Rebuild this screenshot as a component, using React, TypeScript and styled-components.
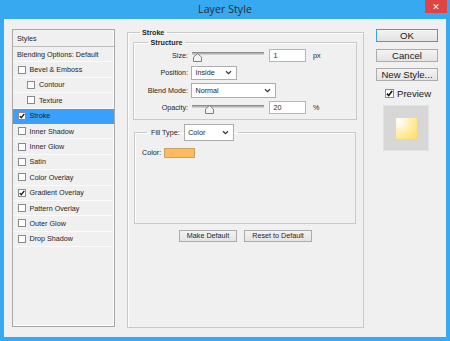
import React from "react";
import styled, { createGlobalStyle } from "styled-components";

const GlobalStyle = createGlobalStyle`
  html, body { margin: 0; padding: 0; background: #36a9f0; }
  * { box-sizing: border-box; }
  body { font-family: "Liberation Sans", Arial, sans-serif; }
`;

const small = `font-family: "Liberation Sans", Arial, sans-serif; font-size: 7.2px; color: #1e1e1e;`;

const Window = styled.div`
  width: 450px;
  height: 341px;
  background: #36a9f0;
  padding: 0 4px 4px 4px;
  display: flex;
  flex-direction: column;
`;

const TitleBar = styled.div`
  position: relative;
  height: 19px;
  display: flex;
  align-items: center;
  justify-content: center;
`;

const Title = styled.div`
  font-family: "Open Sans", "Noto Sans", sans-serif;
  font-size: 10.5px;
  color: #2a2a2a;
  margin-top: -1px;
  letter-spacing: 0.1px;
`;

const CloseButton = styled.div`
  position: absolute;
  top: 0;
  right: -1px;
  width: 22px;
  height: 13px;
  background: #e04444;
  color: #fff;
  font-family: "DejaVu Sans", sans-serif;
  font-size: 9px;
  font-weight: bold;
  display: flex;
  align-items: center;
  justify-content: center;
`;

const Body = styled.div`
  flex: 1;
  background: #f0f0f0;
  display: flex;
  padding: 8.5px 8px 9px 8px;
`;

const StyleList = styled.div`
  width: 103px;
  height: 298px;
  margin-top: 1.5px;
  border: 1px solid #a8a8a8;
  box-shadow: inset -1px -1px 0 #fcfcfc;
  background: #f0f0f0;
  display: flex;
  flex-direction: column;
`;

const ListHeader = styled.div`
  ${small}
  height: 17px;
  border-bottom: 1px solid #bdbdbd;
  display: flex;
  align-items: center;
  padding-left: 4px;
`;

const ListRow = styled.div<{ $indent?: boolean; $selected?: boolean; $plain?: boolean }>`
  ${small}
  height: 15.4px;
  border-bottom: 1px solid ${(p) => (p.$selected ? "#3aa0fa" : "#fbfbfb")};
  background: ${(p) => (p.$selected ? "#3aa0fa" : "transparent")};
  display: flex;
  align-items: center;
  gap: 4px;
  padding-left: ${(p) => (p.$plain ? 4 : p.$indent ? 14 : 4.5)}px;
`;

const CheckBox = styled.span<{ $size?: number }>`
  width: ${(p) => p.$size ?? 8}px;
  height: ${(p) => p.$size ?? 8}px;
  border: 1px solid #8a8a8a;
  background: #fff;
  display: inline-flex;
  align-items: center;
  justify-content: center;
  flex: none;
`;

const Check: React.FC<{ checked?: boolean; size?: number }> = ({ checked, size }) => (
  <CheckBox $size={size}>
    {checked && (
      <svg width={(size ?? 8) - 2} height={(size ?? 8) - 2} viewBox="0 0 6 6">
        <path d="M0.8 3.1 L2.3 4.7 L5.3 0.9" fill="none" stroke="#111" strokeWidth="1.3" />
      </svg>
    )}
  </CheckBox>
);

const GroupBox = styled.fieldset`
  margin: 0;
  padding: 0;
  min-width: 0;
  border: 1px solid #c9c9c9;
  box-shadow: 1px 1px 0 #fdfdfd inset;
`;

const StrokeGroup = styled(GroupBox)`
  width: 237px;
  height: 300px;
  margin-left: 12px;
  display: flex;
  flex-direction: column;
`;

const GroupLegend = styled.legend<{ $offset: number }>`
  ${small}
  font-weight: bold;
  line-height: 9px;
  padding: 0 2.5px;
  margin-left: ${(p) => p.$offset}px;
`;

const StructureGroup = styled(GroupBox)`
  margin: 1px 6px 0 5px;
  padding: 0 0 2px 0;
`;

const FieldGrid = styled.div`
  display: grid;
  grid-template-columns: 54px auto;
  grid-auto-rows: 17.5px;
  column-gap: 3px;
  align-items: center;
`;

const FieldLabel = styled.div`
  ${small}
  text-align: right;
`;

const FieldControls = styled.div`
  display: flex;
  align-items: center;
`;

const SliderBox = styled.div`
  position: relative;
  width: 72px;
  height: 15px;
  margin-left: 1px;
`;

const Track = styled.div`
  position: absolute;
  left: 0;
  right: 0;
  top: 4.5px;
  height: 3px;
  background: #b2b2b2;
  border-top: 1px solid #8e8e8e;
  border-bottom: 1px solid #d0d0d0;
`;

const Thumb = styled.svg`
  position: absolute;
  top: 5px;
`;

const Slider: React.FC<{ pos: number }> = ({ pos }) => (
  <SliderBox>
    <Track />
    <Thumb width="9" height="9" viewBox="0 0 9 9" style={{ left: pos }}>
      <path d="M0.5 8.5 V4 L4.5 0.7 L8.5 4 V8.5 Z" fill="#f3f3f3" stroke="#808080" strokeWidth="1" />
    </Thumb>
  </SliderBox>
);

const NumberInput = styled.div`
  ${small}
  width: 37px;
  height: 13px;
  margin-left: 5px;
  border: 1px solid #b4b6bd;
  background: #fff;
  display: flex;
  align-items: center;
  padding-left: 3.5px;
`;

const Unit = styled.span`
  ${small}
  margin-left: 7px;
`;

const SelectBox = styled.div<{ $width: number; $height: number }>`
  ${small}
  width: ${(p) => p.$width}px;
  height: ${(p) => p.$height}px;
  border: 1px solid #adadad;
  background: #fff;
  display: flex;
  align-items: center;
  justify-content: space-between;
  padding: 0 4px 0 3.5px;
`;

const Select: React.FC<{ value: string; width: number; height: number }> = ({ value, width, height }) => (
  <SelectBox $width={width} $height={height}>
    <span>{value}</span>
    <svg width="7" height="5" viewBox="0 0 7 5">
      <path d="M1 1.2 L3.5 3.6 L6 1.2" fill="none" stroke="#333" strokeWidth="1.2" />
    </svg>
  </SelectBox>
);

const FillGroup = styled(GroupBox)`
  margin: 4px 7px 0 6px;
  height: 100px;
  padding: 0;
`;

const FillLegend = styled.legend`
  ${small}
  display: flex;
  align-items: center;
  gap: 4px;
  padding: 0 4px;
  margin-left: 12px;
`;

const ColorRow = styled.div`
  display: flex;
  align-items: center;
  gap: 3px;
  margin-top: 7px;
  padding-left: 7px;
`;

const SmallText = styled.span`
  ${small}
`;

const Swatch = styled.div<{ $color: string }>`
  width: 31px;
  height: 10px;
  background: ${(p) => p.$color};
  border: 1px solid #c8a070;
`;

const ButtonRow = styled.div`
  display: flex;
  justify-content: center;
  gap: 7px;
  margin-top: 6px;
`;

const SmallButton = styled.div<{ $width: number }>`
  ${small}
  width: ${(p) => p.$width}px;
  height: 12.5px;
  border: 1px solid #acacac;
  background: linear-gradient(#f3f3f3, #e4e4e4);
  display: flex;
  align-items: center;
  justify-content: center;
`;

const SideColumn = styled.div`
  width: 62px;
  margin-left: 12px;
  margin-top: 1.5px;
  display: flex;
  flex-direction: column;
`;

const DialogButton = styled.div<{ $primary?: boolean }>`
  font-family: "Liberation Sans", Arial, sans-serif;
  font-size: 9.6px;
  color: #1a1a1a;
  height: 13px;
  margin-bottom: 6.5px;
  border: 1px solid ${(p) => (p.$primary ? "#3c9ee6" : "#acacac")};
  background: linear-gradient(#f3f3f3, #e3e3e3);
  display: flex;
  align-items: center;
  justify-content: center;
`;

const PreviewToggle = styled.div`
  display: flex;
  align-items: center;
  gap: 3px;
  margin: 0.5px 0 0 9px;
  font-family: "Liberation Sans", Arial, sans-serif;
  font-size: 9.6px;
  color: #1a1a1a;
`;

const PreviewBox = styled.div`
  width: 46px;
  height: 46px;
  margin: 6px 0 0 7px;
  background: #d7d7d7;
  border: 1px solid #e2e2e2;
  display: flex;
  align-items: center;
  justify-content: center;
`;

const PreviewSwatch = styled.div`
  width: 21px;
  height: 21px;
  background: radial-gradient(circle at 15% 15%, #ffffff 0%, #fff3c0 35%, #ffe47e 75%, #ffdc6a 100%);
`;

const layers: { name: string; indent?: boolean; checked?: boolean; selected?: boolean }[] = [
  { name: "Bevel & Emboss" },
  { name: "Contour", indent: true },
  { name: "Texture", indent: true },
  { name: "Stroke", checked: true, selected: true },
  { name: "Inner Shadow" },
  { name: "Inner Glow" },
  { name: "Satin" },
  { name: "Color Overlay" },
  { name: "Gradient Overlay", checked: true },
  { name: "Pattern Overlay" },
  { name: "Outer Glow" },
  { name: "Drop Shadow" },
];

export default function App() {
  return (
    <>
      <GlobalStyle />
      <Window>
        <TitleBar>
          <Title>Layer Style</Title>
          <CloseButton>✕</CloseButton>
        </TitleBar>
        <Body>
          <StyleList>
            <ListHeader>Styles</ListHeader>
            <ListRow $plain>Blending Options: Default</ListRow>
            {layers.map((l) => (
              <ListRow key={l.name} $indent={l.indent} $selected={l.selected}>
                <Check checked={l.checked} />
                <span>{l.name}</span>
              </ListRow>
            ))}
          </StyleList>

          <StrokeGroup>
            <GroupLegend $offset={11.5}>Stroke</GroupLegend>
            <StructureGroup>
              <GroupLegend $offset={14}>Structure</GroupLegend>
              <FieldGrid>
                <FieldLabel>Size:</FieldLabel>
                <FieldControls>
                  <Slider pos={0.5} />
                  <NumberInput>1</NumberInput>
                  <Unit>px</Unit>
                </FieldControls>
                <FieldLabel>Position:</FieldLabel>
                <FieldControls>
                  <Select value="Inside" width={46} height={14} />
                </FieldControls>
                <FieldLabel>Blend Mode:</FieldLabel>
                <FieldControls>
                  <Select value="Normal" width={85} height={15} />
                </FieldControls>
                <FieldLabel>Opacity:</FieldLabel>
                <FieldControls>
                  <Slider pos={12.5} />
                  <NumberInput>20</NumberInput>
                  <Unit>%</Unit>
                </FieldControls>
              </FieldGrid>
            </StructureGroup>

            <FillGroup>
              <FillLegend>
                <span>Fill Type:</span>
                <Select value="Color" width={50} height={17} />
              </FillLegend>
              <ColorRow>
                <SmallText>Color:</SmallText>
                <Swatch $color="#ffbb5a" />
              </ColorRow>
            </FillGroup>

            <ButtonRow>
              <SmallButton $width={58}>Make Default</SmallButton>
              <SmallButton $width={68}>Reset to Default</SmallButton>
            </ButtonRow>
          </StrokeGroup>

          <SideColumn>
            <DialogButton $primary>OK</DialogButton>
            <DialogButton>Cancel</DialogButton>
            <DialogButton>New Style...</DialogButton>
            <PreviewToggle>
              <Check checked size={9} />
              <span>Preview</span>
            </PreviewToggle>
            <PreviewBox>
              <PreviewSwatch />
            </PreviewBox>
          </SideColumn>
        </Body>
      </Window>
    </>
  );
}
